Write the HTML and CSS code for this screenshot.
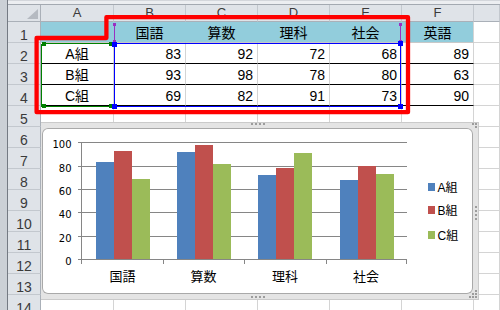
FILE: index.html
```html
<!DOCTYPE html>
<html lang="ja">
<head>
<meta charset="utf-8">
<title>Excel グラフ</title>
<link rel="stylesheet" href="styles.css">
</head>
<body>
<div class="window">
  <div class="leftbar"></div>
  <div class="pane">
    <div class="topbar"></div>
    <div class="sheet">
      <div class="grid">
        <div class="corner"></div>
        <div class="ch">A</div><div class="ch">B</div><div class="ch">C</div><div class="ch">D</div><div class="ch">E</div><div class="ch">F</div><div class="ch"></div>

        <div class="rh">1</div>
        <div class="hd"></div><div class="hd">国語</div><div class="hd">算数</div><div class="hd">理科</div><div class="hd">社会</div><div class="hd hd-last">英語</div><div class="c"></div>

        <div class="rh">2</div>
        <div class="d ctr">A組</div><div class="d num">83</div><div class="d num">92</div><div class="d num">72</div><div class="d num">68</div><div class="d num">89</div><div class="c"></div>

        <div class="rh">3</div>
        <div class="d ctr">B組</div><div class="d num">93</div><div class="d num">98</div><div class="d num">78</div><div class="d num">80</div><div class="d num">63</div><div class="c"></div>

        <div class="rh">4</div>
        <div class="d ctr">C組</div><div class="d num">69</div><div class="d num">82</div><div class="d num">91</div><div class="d num">73</div><div class="d num">90</div><div class="c"></div>

        <div class="rh">5</div><div class="c"></div><div class="c"></div><div class="c"></div><div class="c"></div><div class="c"></div><div class="c"></div><div class="c"></div>
        <div class="rh">6</div><div class="c"></div><div class="c"></div><div class="c"></div><div class="c"></div><div class="c"></div><div class="c"></div><div class="c"></div>
        <div class="rh">7</div><div class="c"></div><div class="c"></div><div class="c"></div><div class="c"></div><div class="c"></div><div class="c"></div><div class="c"></div>
        <div class="rh">8</div><div class="c"></div><div class="c"></div><div class="c"></div><div class="c"></div><div class="c"></div><div class="c"></div><div class="c"></div>
        <div class="rh">9</div><div class="c"></div><div class="c"></div><div class="c"></div><div class="c"></div><div class="c"></div><div class="c"></div><div class="c"></div>
        <div class="rh">10</div><div class="c"></div><div class="c"></div><div class="c"></div><div class="c"></div><div class="c"></div><div class="c"></div><div class="c"></div>
        <div class="rh">11</div><div class="c"></div><div class="c"></div><div class="c"></div><div class="c"></div><div class="c"></div><div class="c"></div><div class="c"></div>
        <div class="rh">12</div><div class="c"></div><div class="c"></div><div class="c"></div><div class="c"></div><div class="c"></div><div class="c"></div><div class="c"></div>
        <div class="rh">13</div><div class="c"></div><div class="c"></div><div class="c"></div><div class="c"></div><div class="c"></div><div class="c"></div><div class="c"></div>
        <div class="rh">14</div><div class="c"></div><div class="c"></div><div class="c"></div><div class="c"></div><div class="c"></div><div class="c"></div><div class="c"></div>
      </div>

      <div class="chart-frame">
        <div class="chart">
          <svg class="plot" width="431" height="166" viewBox="0 0 431 166">
            <g class="gridlines" shape-rendering="crispEdges">
              <line x1="36" y1="14.5" x2="365" y2="14.5"/>
              <line x1="36" y1="38.5" x2="365" y2="38.5"/>
              <line x1="36" y1="61.5" x2="365" y2="61.5"/>
              <line x1="36" y1="84.5" x2="365" y2="84.5"/>
              <line x1="36" y1="108.5" x2="365" y2="108.5"/>
            </g>
            <g shape-rendering="crispEdges">
              <rect class="sa" x="54" y="34.4" width="18" height="97.1"/>
              <rect class="sb" x="72" y="22.7" width="18" height="108.8"/>
              <rect class="sc" x="90" y="50.8" width="18" height="80.7"/>

              <rect class="sa" x="135" y="23.9" width="18" height="107.6"/>
              <rect class="sb" x="153" y="16.8" width="18" height="114.7"/>
              <rect class="sc" x="171" y="35.6" width="18" height="95.9"/>

              <rect class="sa" x="216" y="47.3" width="18" height="84.2"/>
              <rect class="sb" x="234" y="40.2" width="18" height="91.3"/>
              <rect class="sc" x="252" y="25" width="18" height="106.5"/>

              <rect class="sa" x="298" y="51.9" width="18" height="79.6"/>
              <rect class="sb" x="316" y="37.9" width="18" height="93.6"/>
              <rect class="sc" x="334" y="46.1" width="18" height="85.4"/>
            </g>
            <g class="axes" shape-rendering="crispEdges">
              <line x1="39.5" y1="14" x2="39.5" y2="132"/>
              <line x1="36" y1="131.5" x2="365" y2="131.5"/>
              <line x1="39.5" y1="131" x2="39.5" y2="136"/>
              <line x1="121.5" y1="131" x2="121.5" y2="136"/>
              <line x1="202.5" y1="131" x2="202.5" y2="136"/>
              <line x1="284.5" y1="131" x2="284.5" y2="136"/>
              <line x1="364.5" y1="131" x2="364.5" y2="136"/>
            </g>
            <g class="ylabels">
              <text x="29.5" y="19.5">100</text>
              <text x="29.5" y="43.5">80</text>
              <text x="29.5" y="66.5">60</text>
              <text x="29.5" y="89.5">40</text>
              <text x="29.5" y="113.5">20</text>
              <text x="29.5" y="136.5">0</text>
            </g>
            <g class="xlabels">
              <text x="80.5" y="153">国語</text>
              <text x="161.5" y="153">算数</text>
              <text x="243" y="153">理科</text>
              <text x="324" y="153">社会</text>
            </g>
            <g class="legend">
              <rect class="sa" x="386" y="55" width="7" height="8" shape-rendering="crispEdges"/>
              <text x="395.5" y="63.5">A組</text>
              <rect class="sb" x="386" y="78" width="7" height="8" shape-rendering="crispEdges"/>
              <text x="395.5" y="87">B組</text>
              <rect class="sc" x="386" y="103" width="7" height="8" shape-rendering="crispEdges"/>
              <text x="395.5" y="111.5">C組</text>
            </g>
          </svg>
        </div>
      </div>
    </div>
  </div>

  <svg class="marks" width="500" height="310" viewBox="0 0 500 310">
    <g fill="none" shape-rendering="crispEdges">
      <path d="M41.5 43.5 H113 M41.5 43.5 V106.5 M41.5 106.5 H113" stroke="#008000"/>
      <rect x="114.5" y="43.5" width="286" height="62.5" stroke="#0000ff"/>
      <path d="M114.5 23 V43 M400.5 23 V43" stroke="#9a2fc2"/>
    </g>
    <g shape-rendering="crispEdges">
      <rect x="42" y="42" width="4" height="4" fill="#008000"/>
      <rect x="42" y="104" width="4" height="4" fill="#008000"/>
      <rect x="109" y="42" width="4" height="4" fill="#008000"/>
      <rect x="109" y="104" width="4" height="4" fill="#008000"/>
      <rect x="113" y="23" width="3" height="3" fill="#9a2fc2"/>
      <rect x="399" y="23" width="3" height="3" fill="#9a2fc2"/>
      <rect x="113" y="40" width="3" height="3" fill="#9a2fc2"/>
      <rect x="399" y="40" width="3" height="3" fill="#9a2fc2"/>
      <rect x="112" y="42" width="5" height="5" fill="#0000ff"/>
      <rect x="398" y="41" width="5" height="5" fill="#0000ff"/>
      <rect x="112" y="104" width="5" height="5" fill="#0000ff"/>
      <rect x="398" y="104" width="5" height="5" fill="#0000ff"/>
    </g>
    <g class="dots" shape-rendering="crispEdges">
      <rect x="251" y="123" width="2" height="2"/><rect x="255" y="123" width="2" height="2"/><rect x="259" y="123" width="2" height="2"/><rect x="263" y="123" width="2" height="2"/>
      <rect x="251" y="296" width="2" height="2"/><rect x="255" y="296" width="2" height="2"/><rect x="259" y="296" width="2" height="2"/><rect x="263" y="296" width="2" height="2"/>
      <rect x="475" y="206" width="2" height="2"/><rect x="475" y="210" width="2" height="2"/><rect x="475" y="214" width="2" height="2"/><rect x="475" y="218" width="2" height="2"/>
      <rect x="472" y="123" width="2" height="2"/><rect x="475" y="123" width="2" height="2"/><rect x="475" y="126" width="2" height="2"/>
      <rect x="475" y="290" width="2" height="2"/><rect x="472" y="293" width="2" height="2"/><rect x="475" y="293" width="2" height="2"/><rect x="469" y="296" width="2" height="2"/><rect x="472" y="296" width="2" height="2"/><rect x="475" y="296" width="2" height="2"/>
    </g>
    <path class="callout" d="M36.6 38 H106.4 V17.2 H408 V112.2 H36.6 Z"/>
  </svg>
</div>
</body>
</html>
```

FILE: styles.css
```css
html, body {
  margin: 0;
  padding: 0;
  background: #ffffff;
}

body {
  width: 500px;
  height: 310px;
  overflow: hidden;
  font-family: "Liberation Sans", "Noto Sans CJK JP", sans-serif;
  color: #000;
}

.window {
  position: relative;
  display: flex;
  width: 500px;
  height: 310px;
  overflow: hidden;
}

.leftbar {
  flex: none;
  width: 8px;
  box-sizing: border-box;
  background: #cbd0d6;
  border-right: 1px solid #747a83;
}

.pane {
  flex: 1;
  min-width: 0;
  display: flex;
  flex-direction: column;
}

.topbar {
  flex: none;
  height: 5px;
  box-sizing: border-box;
  background: #eceef1;
  border-top: 1px solid #d3d6db;
  border-bottom: 1px solid #a3a9b1;
}

.sheet {
  position: relative;
  flex: 1;
  overflow: hidden;
}

.grid {
  display: grid;
  grid-template-columns: 33px 73px repeat(5, 72px) 1fr;
  grid-template-rows: 17px repeat(14, 21px);
}

.grid > div {
  box-sizing: border-box;
  border-right: 1px solid #d4d4d4;
  border-bottom: 1px solid #d4d4d4;
  white-space: nowrap;
  overflow: hidden;
}

.grid > .corner {
  position: relative;
  background: #dfe3e8;
  border-right-color: #aab0b8;
  border-bottom-color: #aab0b8;
}

.corner::after {
  content: "";
  position: absolute;
  right: 2px;
  bottom: 2px;
  width: 0;
  height: 0;
  border-left: 11px solid transparent;
  border-bottom: 10px solid #b5bac1;
}

.grid > .ch {
  background: #dfe3e8;
  border-right-color: #c3c8ce;
  border-bottom-color: #aab0b8;
  text-align: center;
  font-size: 13px;
  line-height: 16px;
  color: #3a3a3a;
}

.grid > .rh {
  background: #dfe3e8;
  border-right-color: #aab0b8;
  border-bottom-color: #c3c8ce;
  text-align: center;
  font-size: 14px;
  line-height: 13px;
  padding-top: 7px;
  color: #3a3a3a;
}

.grid > .hd {
  background: #92cddc;
  border-right-color: #92cddc;
  border-bottom-color: #c8c8c8;
  text-align: center;
  font-size: 14px;
  line-height: 17px;
  padding-top: 3px;
}

.grid > .hd-last {
  border-right-color: #d4d4d4;
}

.grid > .d {
  font-size: 14px;
  line-height: 17px;
  padding-top: 3px;
  border-bottom-color: #000000;
}

.num {
  text-align: right;
  padding-right: 4px;
}

.ctr {
  text-align: center;
}

.chart-frame {
  position: absolute;
  left: 33px;
  top: 117px;
  width: 438px;
  height: 178px;
  box-sizing: border-box;
  background: #e4e4e4;
  border: 1px solid #cacaca;
  border-left: none;
  padding: 5px 5px 5px 1px;
}

.chart {
  width: 431px;
  height: 166px;
  background: #ffffff;
  border-radius: 6px;
  box-shadow: inset 0 0 0 1px #a9a9a9;
}

.plot {
  display: block;
}

.gridlines line,
.axes line {
  stroke: #868686;
  stroke-width: 1;
}

.sa { fill: #4f81bd; }
.sb { fill: #c0504d; }
.sc { fill: #9bbb59; }

.ylabels text {
  font-family: "DejaVu Sans", sans-serif;
  font-size: 10px;
  text-anchor: end;
  fill: #000;
}

.xlabels text {
  font-family: "Noto Sans CJK JP", sans-serif;
  font-size: 13px;
  text-anchor: middle;
  fill: #000;
}

.legend text {
  font-family: "Liberation Sans", "Noto Sans CJK JP", sans-serif;
  font-size: 12px;
  fill: #000;
}

.marks {
  position: absolute;
  left: 0;
  top: 0;
  pointer-events: none;
}

.dots rect {
  fill: #9c9c9c;
}

.callout {
  fill: none;
  stroke: #ff0000;
  stroke-width: 4.3;
  stroke-linejoin: round;
}
```
